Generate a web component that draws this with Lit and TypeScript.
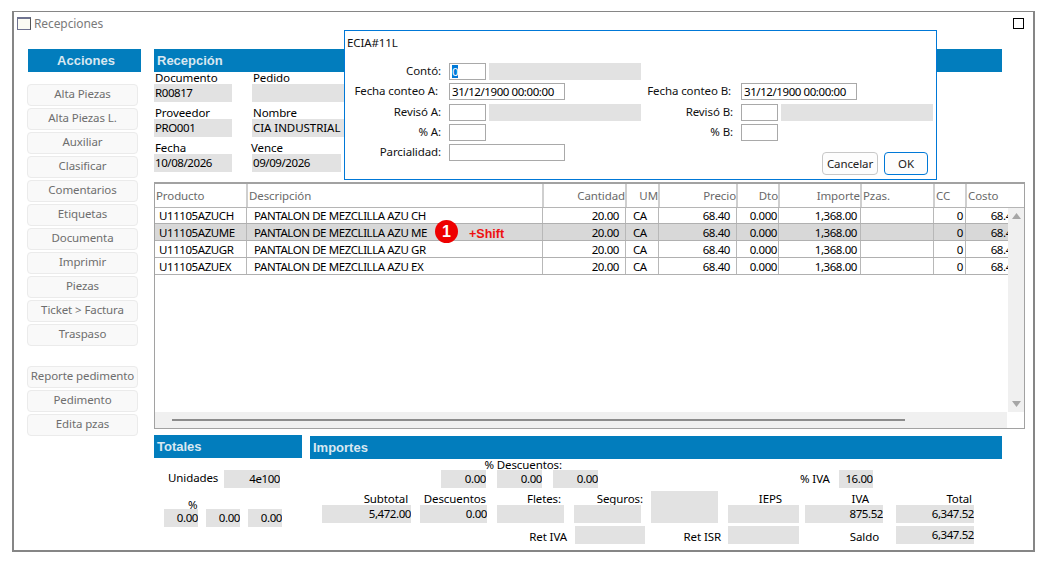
import { LitElement, html, css } from "lit";
import { customElement } from "lit/decorators.js";

const actionsA = ["Alta Piezas","Alta Piezas L.","Auxiliar","Clasificar","Comentarios","Etiquetas","Documenta","Imprimir","Piezas","Ticket > Factura","Traspaso"];
const actionsB = ["Reporte pedimento","Pedimento","Edita pzas"];
const rows = [
  ["U11105AZUCH","PANTALON DE MEZCLILLA AZU CH"],
  ["U11105AZUME","PANTALON DE MEZCLILLA AZU ME"],
  ["U11105AZUGR","PANTALON DE MEZCLILLA AZU GR"],
  ["U11105AZUEX","PANTALON DE MEZCLILLA AZU EX"],
];

@customElement("app-root")
export class AppRoot extends LitElement {
  static styles = css`
    :host { display: block; font-family: "Noto Sans", sans-serif; font-size: 11.5px; letter-spacing: -0.1px; color: #000; background: #fff; height: 562px; overflow: hidden; }
    * { box-sizing: border-box; }
    .window { position: relative; margin: 11px 0 0 12px; width: 1023px; height: 541px; border: 1px solid #868686; border-left-width: 2px; border-bottom-width: 2px; border-right-width: 2px; }
    .titlebar { display: flex; align-items: flex-start; height: 37px; padding: 5px 9px 0 3px; color: #7a7a7a; line-height: 14px; font-size: 12px; }
    .win-icon { width: 14px; height: 13px; border: 1px solid #6f7390; border-top-width: 2px; border-right-color: #555; background: #fbfbf4; margin-right: 3px; }
    .close { margin-left: auto; width: 11px; height: 11px; border: 1px solid #000; margin-top: 1px; }
    .body { display: flex; padding-left: 14px; }
    .side { width: 113px; margin-right: 13px; }
    .hdr { background: #027dbd; color: #d9e8f1; height: 23px; letter-spacing: 0; font: bold 13px/23px "Liberation Sans", Arial, sans-serif; padding-left: 3px; }
    .hdr.center { text-align: center; padding-left: 3px; }
    .actions { display: flex; flex-direction: column; gap: 2px; margin: 12px 0 0 -1px; width: 111px; }
    .actions + .actions { margin-top: 20px; }
    .action { height: 22px; border: 1px solid #ebebeb; border-radius: 4px; background: #f9f9f9; color: #6e6e6e; text-align: center; line-height: 18px; white-space: nowrap; }
    .main { width: 871px; }
    .main > .hdr { width: 848px; }
    .fields { display: grid; grid-template-columns: 78px 92px; column-gap: 20px; row-gap: 4px; margin-top: -1px; }
    .lbl { line-height: 14px; height: 13px; white-space: nowrap; padding-left: 1px; }
    .lbl.v { margin-left: -2px; }
    .box { background: #e2e2e2; height: 18px; line-height: 17px; white-space: nowrap; overflow: hidden; letter-spacing: -0.42px; }
    .box.l { padding-left: 1px; }
    .box.r { text-align: right; }
    .box.caps { letter-spacing: -0.05px; }
    .short { width: 89px; }
    .table { margin-top: 10px; width: 871px; height: 247px; border: 1px solid #a2a2a2; border-top-width: 2px; display: flex; flex-direction: column; }
    .thead, .row { display: grid; grid-template-columns: 92px 296px 83px 33px 78px 42px 82px 73px 32px 58px; }
    .thead { height: 24px; border-bottom: 1px solid #b5b5b5; color: #6a6a6a; line-height: 24px; }
    .th { border-right: 1px solid #cfcfcf; box-shadow: 1px 0 0 #cfcfcf; padding-left: 2px; white-space: nowrap; overflow: hidden; }
    .th:first-child { padding-left: 1px; }
    .th.r { text-align: right; padding: 0; }
    .th:last-child { border-right: 0; box-shadow: none; }
    .mid { display: flex; height: 204px; }
    .rows { width: 853px; overflow: hidden; }
    .row { width: 869px; height: 17px; border-bottom: 1px solid #b0b0b0; line-height: 17px; letter-spacing: -0.42px; }
    .row:first-child { height: 16px; line-height: 16px; }
    .row.sel { background: #d8d8d8; }
    .td { border-right: 1px solid #b8b8b8; white-space: nowrap; overflow: hidden; padding-left: 4px; }
    .td.desc { padding-left: 7px; }
    .td.r { text-align: right; padding: 0 6px 0 0; }
    .td.r.tight { padding-right: 1px; }
    .td.r.imp-v { padding-right: 3px; }
    .td.r.cc { padding-right: 2px; }
    .td.um { padding-left: 7px; }
    .td.cost { border-right: 0; text-align: right; padding-right: 6px; }
    .vscroll { width: 16px; background: #f0f0f0; display: flex; flex-direction: column; justify-content: space-between; align-items: center; padding: 5px 0; }
    .hrow { display: flex; height: 16px; }
    .htrack { width: 852px; background: #f0f0f0; padding: 7px 0 0 17px; }
    .hthumb { width: 733px; height: 2px; background: #8c8c8c; }
    .bottom { display: flex; margin-top: 6px; }
    .tot { width: 148px; margin-right: 8px; }
    .unid { display: flex; align-items: flex-start; margin: 12px 0 0 14px; }
    .unid .t { width: 56px; line-height: 16px; }
    .unid .box { width: 56px; }
    .pct-l { margin: 12px 0 0 34px; height: 9px; line-height: 10px; }
    .pct { display: flex; gap: 8px; margin-left: 10px; }
    .pct .box { width: 34px; }
    .imp { width: 692px; margin-top: 1px; }
    .disc-row { display: flex; height: 29px; }
    .disc { margin-left: 131px; width: 157px; }
    .disc .t { height: 11px; line-height: 11px; text-align: right; white-space: nowrap; margin-right: 36px; }
    .disc .bs { display: flex; gap: 11px; }
    .disc .box { width: 45px; }
    .iva { display: flex; align-items: flex-end; margin-left: 202px; gap: 9px; }
    .iva .t { line-height: 18px; }
    .iva .box { width: 34px; }
    .grid { display: grid; padding-left: 12px; margin-top: 3px; grid-template-columns: 98px 77px 77px 77px 77px 77px 91px 78px; grid-template-rows: 14px 18px 18px; }
    .h { line-height: 16px; white-space: nowrap; display: flex; justify-content: flex-end; }
    .row3 { margin-top: 3px; line-height: 21px; white-space: nowrap; display: flex; justify-content: flex-end; }
    .w89 { width: 89px; } .w67 { width: 67px; } .w69 { width: 69px; } .w70 { width: 70px; } .w71 { width: 71px; } .w78 { width: 78px; }
    .pl1 { margin-left: 1px; margin-top: 3px; }
    .pr1 { padding-right: 1px; } .pr2b { padding-right: 2px; } .pr3b { padding-right: 3px; } .pr4b { padding-right: 4px; }
    .pr14 { padding-right: 14px; } .pr17 { padding-right: 17px; }
    .col6 { grid-column: 6; }
    .tall { grid-column: 5; grid-row: 1 / span 2; height: 32px; width: 67px; }
    .mt3 { margin-top: 3px; }
    .dialog { position: absolute; left: 330px; top: 18px; width: 593px; height: 150px; background: #fff; border: 1px solid #0078d7; }
    .d-title { padding: 5px 0 0 2px; height: 32px; line-height: 14px; color: #111; }
    .d-grid { display: grid; grid-template-columns: 96px 192px 84px 192px; column-gap: 8px; grid-template-rows: 20px 21px 20px 20px 31px; }
    .d-l { display: flex; justify-content: flex-end; white-space: nowrap; line-height: 15px; color: #111; }
    .pr3 { padding-right: 3px; }
    .pr2 { padding-right: 2px; }
    .ctl { display: flex; gap: 3px; align-items: flex-start; }
    .inp { width: 37px; height: 17px; border: 1px solid #a9a9a9; background: #fff; line-height: 15px; padding-left: 2px; white-space: nowrap; letter-spacing: -0.42px; }
    .inp.wide { width: 116px; }
    .gray { width: 152px; height: 17px; background: #e2e2e2; }
    .seltext { background: #0078d7; color: #fff; display: inline-block; line-height: 13px; height: 13px; }
    .btns { grid-column: 3 / span 2; display: flex; justify-content: flex-end; align-items: flex-start; gap: 6px; padding: 8px 5px 0 0; }
    .btn { height: 23px; border-radius: 4px; text-align: center; line-height: 21px; background: #fdfdfd; color: #222; }
    .btn.c { width: 56px; border: 1px solid #c8c8c8; }
    .btn.o { width: 44px; border: 1px solid #0078d7; }
    .badge { position: absolute; left: 421px; top: 208px; width: 23px; height: 23px; border-radius: 50%; background: #ee0000; color: #fff; font: bold 16px/23px "Liberation Sans", Arial, sans-serif; text-align: center; }
    .shift { position: absolute; left: 455px; top: 215px; color: #ee1111; letter-spacing: 0; font: bold 12.5px/14px "Liberation Sans", Arial, sans-serif; }
  `;

  renderRow(r: string[], i: number) {
    return html`<div class="row ${i === 1 ? "sel" : ""}">
      <div class="td">${r[0]}</div>
      <div class="td desc">${r[1]}</div>
      <div class="td r">20.00</div>
      <div class="td um">CA</div>
      <div class="td r">68.40</div>
      <div class="td r tight">0.000</div>
      <div class="td r imp-v">1,368.00</div>
      <div class="td"></div>
      <div class="td r cc">0</div>
      <div class="td cost">68.40</div>
    </div>`;
  }

  render() {
    return html`<div class="window">
      <div class="titlebar"><span class="win-icon"></span><span>Recepciones</span><span class="close"></span></div>
      <div class="body">
        <div class="side">
          <div class="hdr center">Acciones</div>
          <div class="actions">${actionsA.map((a) => html`<div class="action">${a}</div>`)}</div>
          <div class="actions">${actionsB.map((a) => html`<div class="action">${a}</div>`)}</div>
        </div>
        <div class="main">
          <div class="hdr">Recepción</div>
          <div class="fields">
            <div><div class="lbl">Documento</div><div class="box l">R00817</div></div>
            <div><div class="lbl">Pedido</div><div class="box l"></div></div>
            <div><div class="lbl">Proveedor</div><div class="box l">PRO001</div></div>
            <div><div class="lbl">Nombre</div><div class="box l caps">CIA INDUSTRIAL</div></div>
            <div><div class="lbl">Fecha</div><div class="box l">10/08/2026</div></div>
            <div><div class="lbl v">Vence</div><div class="box l short">09/09/2026</div></div>
          </div>
          <div class="table">
            <div class="thead">
              <div class="th">Producto</div><div class="th">Descripción</div><div class="th r">Cantidad</div><div class="th r">UM</div><div class="th r">Precio</div><div class="th r">Dto</div><div class="th r">Importe</div><div class="th">Pzas.</div><div class="th">CC</div><div class="th">Costo</div>
            </div>
            <div class="mid">
              <div class="rows">${rows.map((r, i) => this.renderRow(r, i))}</div>
              <div class="vscroll">
                <svg width="9" height="6" viewBox="0 0 9 6"><path d="M4.5 0L9 6H0z" fill="#a6a6a6"/></svg>
                <svg width="9" height="6" viewBox="0 0 9 6"><path d="M0 0H9L4.5 6z" fill="#a6a6a6"/></svg>
              </div>
            </div>
            <div class="hrow"><div class="htrack"><div class="hthumb"></div></div></div>
          </div>
          <div class="bottom">
            <div class="tot">
              <div class="hdr">Totales</div>
              <div class="unid"><span class="t">Unidades</span><div class="box r">4e100</div></div>
              <div class="pct-l">%</div>
              <div class="pct"><div class="box r">0.00</div><div class="box r">0.00</div><div class="box r">0.00</div></div>
            </div>
            <div class="imp">
              <div class="hdr">Importes</div>
              <div class="disc-row">
                <div class="disc">
                  <div class="t">% Descuentos:</div>
                  <div class="bs"><div class="box r">0.00</div><div class="box r">0.00</div><div class="box r">0.00</div></div>
                </div>
                <div class="iva"><span class="t">% IVA</span><div class="box r">16.00</div></div>
              </div>
              <div class="grid">
                <div class="h w89 pr3b">Subtotal</div>
                <div class="h w67 pr1">Descuentos</div>
                <div class="h w67 pr3b">Fletes:</div>
                <div class="h w69">Seguros:</div>
                <div class="box tall"></div>
                <div class="h w71 pr17">IEPS</div>
                <div class="h w78 pr14">IVA</div>
                <div class="h w78 pr2b">Total</div>
                <div class="box r w89">5,472.00</div>
                <div class="box r w67">0.00</div>
                <div class="box w67"></div>
                <div class="box w67"></div>
                <div class="box w71 col6"></div>
                <div class="box r w78">875.52</div>
                <div class="box r w78">6,347.52</div>
                <div></div>
                <div></div>
                <div class="row3 w70">Ret IVA</div>
                <div class="box w70 pl1"></div>
                <div class="row3 w70">Ret ISR</div>
                <div class="box w71 mt3"></div>
                <div class="row3 w78 pr4b">Saldo</div>
                <div class="box r w78 mt3">6,347.52</div>
              </div>
            </div>
          </div>
        </div>
      </div>
      <div class="badge">1</div>
      <div class="shift">+Shift</div>
      <div class="dialog">
        <div class="d-title">ECIA#11L</div>
        <div class="d-grid">
          <div class="d-l">Contó:</div>
          <div class="ctl"><div class="inp"><span class="seltext">0</span></div><div class="gray"></div></div>
          <div></div><div></div>
          <div class="d-l pr3">Fecha conteo A:</div>
          <div class="ctl"><div class="inp wide">31/12/1900 00:00:00</div></div>
          <div class="d-l pr2">Fecha conteo B:</div>
          <div class="ctl"><div class="inp wide">31/12/1900 00:00:00</div></div>
          <div class="d-l">Revisó A:</div>
          <div class="ctl"><div class="inp"></div><div class="gray"></div></div>
          <div class="d-l">Revisó B:</div>
          <div class="ctl"><div class="inp"></div><div class="gray"></div></div>
          <div class="d-l">% A:</div>
          <div class="ctl"><div class="inp"></div></div>
          <div class="d-l">% B:</div>
          <div class="ctl"><div class="inp"></div></div>
          <div class="d-l">Parcialidad:</div>
          <div class="ctl"><div class="inp wide"></div></div>
          <div class="btns"><div class="btn c">Cancelar</div><div class="btn o">OK</div></div>
        </div>
      </div>
    </div>`;
  }
}
